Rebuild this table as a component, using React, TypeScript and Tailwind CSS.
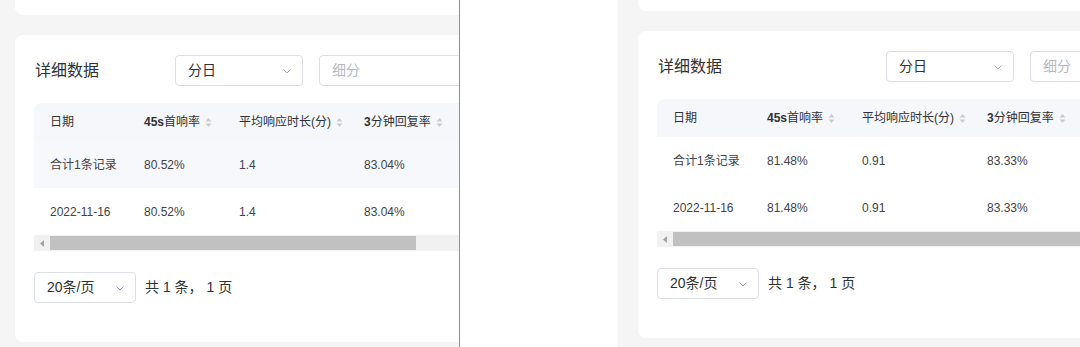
import React from 'react';

interface Row {
  date: string;
  rate45: string;
  avg: string;
  rate3: string;
}

interface PanelProps {
  padL: string;
  topH: string;
  titleW: string;
  highlight: boolean;
  rows: Row[];
  thumbW: string;
}

const font = { fontFamily: '"Liberation Sans", "Noto Sans CJK SC", sans-serif' };

function Chevron() {
  return (
    <svg width="12" height="12" viewBox="0 0 12 12" className="text-[#a8abb2]">
      <path d="M2.5 4.5 L6 8 L9.5 4.5" fill="none" stroke="currentColor" strokeWidth="1" />
    </svg>
  );
}

function SortIcon() {
  return (
    <svg width="7" height="11" viewBox="0 0 7 11" className="ml-[5px] text-[#c8cbd2]">
      <path d="M3.5 1 L6.5 4.5 L0.5 4.5 Z" fill="currentColor" />
      <path d="M3.5 10 L6.5 6.5 L0.5 6.5 Z" fill="currentColor" />
    </svg>
  );
}

function Panel({ padL, topH, titleW, highlight, rows, thumbW }: PanelProps) {
  return (
    <div className={`flex flex-col gap-5 ${padL} h-full`}>
      <div className={`${topH} w-[640px] bg-white rounded-b-lg shrink-0`} />
      <div className="w-[640px] bg-white rounded-lg pt-5 pb-[39px] px-[19px]">
        <div className="flex items-center pl-px">
          <div className={`${titleW} text-[16px] text-[#303133]`}>详细数据</div>
          <div className="w-[128px] h-[31px] border border-[#dcdfe6] rounded flex items-center justify-between pl-3 pr-[9px] text-[14px] text-[#303133]">
            <span>分日</span>
            <Chevron />
          </div>
          <div className="ml-4 w-[200px] h-[31px] border border-[#dcdfe6] rounded flex items-center pl-3 text-[14px] text-[#b5b8bf]">
            细分
          </div>
        </div>

        <div className="mt-[17px] text-[12px]">
          <div className="flex h-[38px] items-center bg-[#f5f7fb] rounded-tl-lg text-[#303133]">
            <div className="w-[94px] pl-4">日期</div>
            <div className="w-[95px] pl-4 flex items-center">
              <span><b>45s</b>首响率</span>
              <SortIcon />
            </div>
            <div className="w-[125px] pl-4 flex items-center">
              <span>平均响应时长(分)</span>
              <SortIcon />
            </div>
            <div className="w-[150px] pl-4 flex items-center">
              <span><b>3</b>分钟回复率</span>
              <SortIcon />
            </div>
          </div>
          {rows.map((r, i) => (
            <div
              key={i}
              className={`flex h-[47px] items-center text-[#404246] ${i === 0 && highlight ? 'bg-[#f7f8fc]' : 'bg-white'}`}
            >
              <div className="w-[94px] pl-4">{r.date}</div>
              <div className="w-[95px] pl-4">{r.rate45}</div>
              <div className="w-[125px] pl-4">{r.avg}</div>
              <div className="w-[150px] pl-4">{r.rate3}</div>
            </div>
          ))}
          <div className="flex h-[16px] items-center bg-[#f1f1f1]">
            <div className="w-4 flex justify-center">
              <svg width="4" height="7" viewBox="0 0 4 7">
                <path d="M4 0 L0 3.5 L4 7 Z" fill="#a3a3a3" />
              </svg>
            </div>
            <div className={`${thumbW} h-[14px] bg-[#c1c1c1]`} />
          </div>
        </div>

        <div className="mt-[21px] flex items-center">
          <div className="w-[102px] h-[31px] border border-[#dcdfe6] rounded flex items-center justify-between pl-3 pr-[9px] text-[14px] text-[#303133]">
            <span>20条/页</span>
            <Chevron />
          </div>
          <span className="ml-[9px] text-[14px] text-[#303133]">共 1 条， 1 页</span>
        </div>
      </div>
    </div>
  );
}

export default function App() {
  const left: Row[] = [
    { date: '合计1条记录', rate45: '80.52%', avg: '1.4', rate3: '83.04%' },
    { date: '2022-11-16', rate45: '80.52%', avg: '1.4', rate3: '83.04%' },
  ];
  const right: Row[] = [
    { date: '合计1条记录', rate45: '81.48%', avg: '0.91', rate3: '83.33%' },
    { date: '2022-11-16', rate45: '81.48%', avg: '0.91', rate3: '83.33%' },
  ];

  return (
    <div className="flex w-[1080px] h-[347px] overflow-hidden bg-white" style={font}>
      <div className="w-[459px] h-full bg-[#f5f5f5] overflow-hidden shrink-0">
        <Panel padL="pl-[15px]" topH="h-[15px]" titleW="w-[140px]" highlight={true} rows={left} thumbW="w-[366px]" />
      </div>
      <div className="w-px h-full bg-[#8f8f8f] shrink-0" />
      <div className="w-[158px] h-full bg-white shrink-0" />
      <div className="flex-1 h-full bg-[#f5f5f5] overflow-hidden">
        <div className="-mt-1 h-[351px]">
          <Panel padL="pl-5" topH="h-[15px]" titleW="w-[228px]" highlight={false} rows={right} thumbW="w-[500px]" />
        </div>
      </div>
    </div>
  );
}
